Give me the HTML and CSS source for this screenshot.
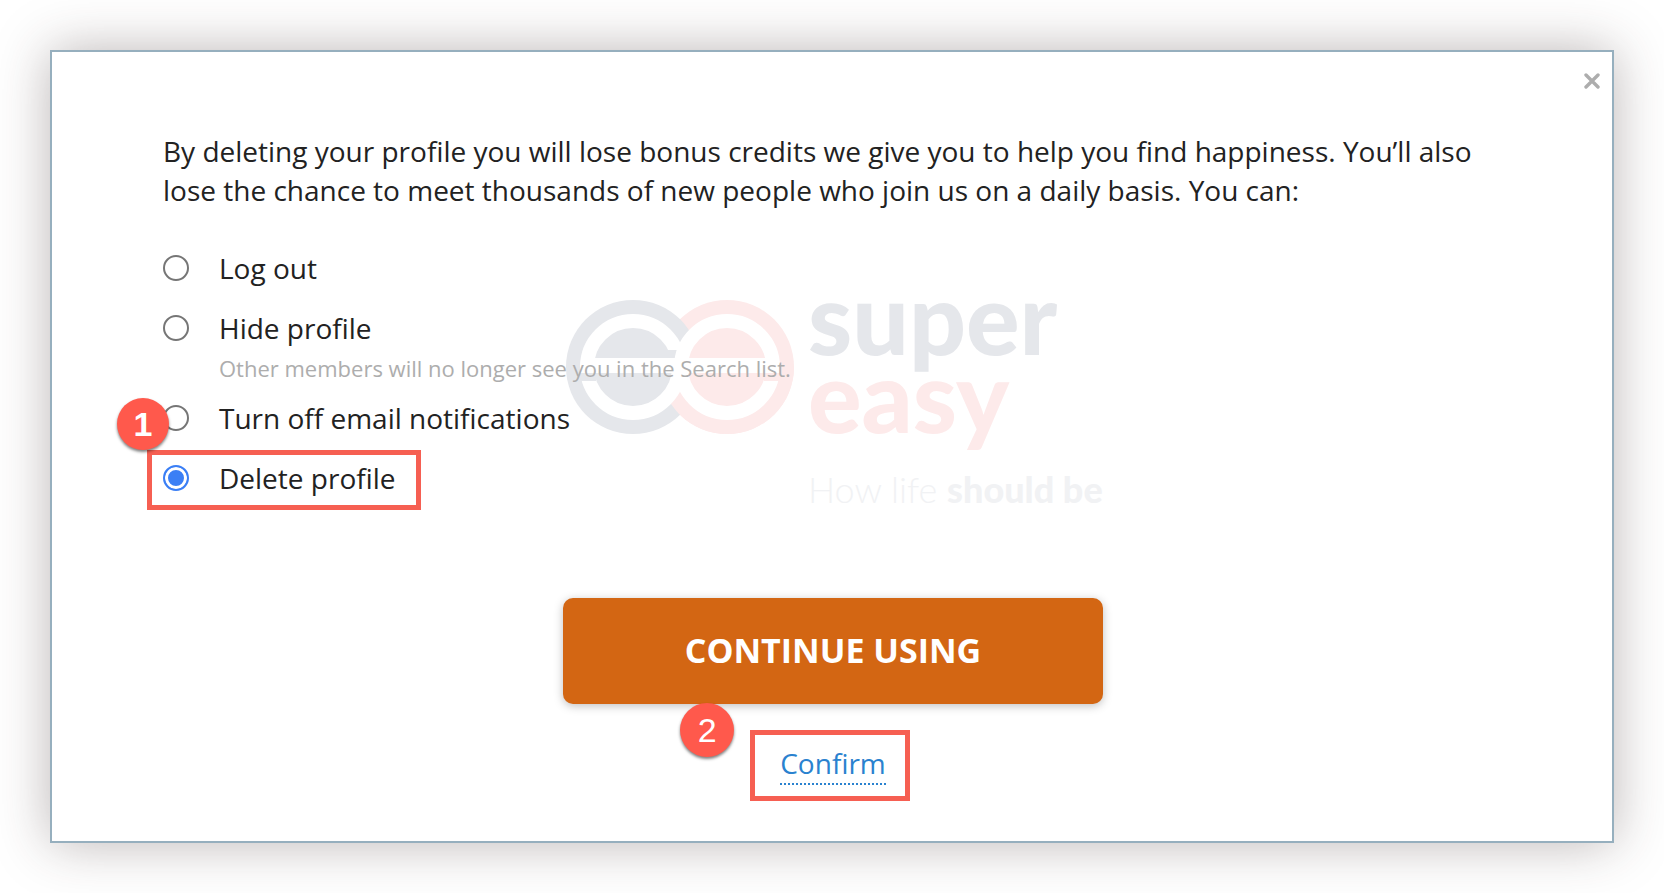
FILE: index.html
```html
<!DOCTYPE html>
<html lang="en">
<head>
  <meta charset="UTF-8">
  <meta name="viewport" content="width=device-width, initial-scale=1.0">
  <title>Delete profile</title>
  <link rel="stylesheet" href="styles.css">
</head>
<body>

  <main class="dialog">
    <button class="close" type="button" aria-label="Close">
      <svg width="16" height="16" viewBox="0 0 16 16">
        <path d="M2 2L14 14M14 2L2 14" stroke="#adadad" stroke-width="3.4" stroke-linecap="round" fill="none"/>
      </svg>
    </button>

    <div class="watermark">
      <svg class="mark" width="228" height="136" viewBox="0 0 228 136">
        <defs>
          <clipPath id="lower"><rect x="0" y="68" width="228" height="68"/></clipPath>
        </defs>
        <circle cx="161" cy="68" r="67" fill="#fdeaea"/>
        <circle cx="67" cy="68" r="67" fill="#e5e7eb"/>
        <circle cx="161" cy="68" r="67" fill="#fdeaea" clip-path="url(#lower)"/>
        <circle cx="67" cy="68" r="46" fill="#e5e7eb" stroke="#fff" stroke-width="14"/>
        <path d="M12 74h18v8H12zM98 51h18v9H98z" fill="#e5e7eb"/>
        <circle cx="161" cy="68" r="46" fill="#fdeaea" stroke="#fff" stroke-width="14"/>
        <path d="M198 74h18v8h-18z" fill="#fdeaea"/>
        <path d="M15 59h198v15H15z" fill="#fff"/>
      </svg>
      <div class="brand">
        <span class="brand-super">super</span>
        <span class="brand-easy">easy</span>
        <span class="tagline">How life <b>should be</b></span>
      </div>
    </div>

    <form class="content">
      <p class="intro">By deleting your profile you will lose bonus credits we give you to help you find happiness. You’ll also lose the chance to meet thousands of new people who join us on a daily basis. You can:</p>

      <div class="options">
        <label class="option"><input type="radio" name="action">Log out</label>
        <div class="option-group">
          <label class="option"><input type="radio" name="action">Hide profile</label>
          <p class="hint">Other members will no longer see you in the Search list.</p>
        </div>
        <label class="option"><input type="radio" name="action">Turn off email notifications</label>
        <div class="highlight highlight-option">
          <label class="option"><input type="radio" name="action" checked>Delete profile</label>
          <span class="badge badge-one">1</span>
        </div>
      </div>

      <div class="actions">
        <button class="continue" type="button">CONTINUE USING</button>
        <div class="highlight highlight-confirm">
          <a class="confirm" href="#">Confirm</a>
          <span class="badge badge-two">2</span>
        </div>
      </div>
    </form>
  </main>

</body>
</html>
```

FILE: styles.css
```css
* {
  box-sizing: border-box;
}

body {
  margin: 0;
  padding: 50px;
  background: #fff;
  color: #222;
  font-family: "Open Sans", sans-serif;
  font-size: 28px;
  line-height: 40px;
}

p {
  margin: 0;
}

.dialog {
  position: relative;
  padding: 80px 109px 40px 111px;
  background: #fff;
  border: 2px solid #96afbe;
  box-shadow: 0 0 50px rgba(60, 40, 40, 0.34);
}

.close {
  position: absolute;
  top: 21px;
  right: 12px;
  display: flex;
  padding: 0;
  border: none;
  background: transparent;
  cursor: pointer;
}

/* ======= WATERMARK ======= */
.watermark {
  position: absolute;
  top: 225px;
  left: 514px;
  display: flex;
  gap: 14px;
}

.mark {
  margin-top: 22px;
}

.brand {
  display: flex;
  flex-direction: column;
  font-family: Lato, sans-serif;
}

.brand-super,
.brand-easy {
  font-size: 100px;
  font-weight: 900;
  line-height: 78px;
}

.brand-super {
  color: #e5e7eb;
}

.brand-easy {
  color: #fdeaea;
}

.tagline {
  margin-top: 36px;
  color: #f1f2f4;
  font-size: 36px;
  font-weight: 300;
}

.tagline b {
  font-weight: 900;
}

/* ======= OPTIONS ======= */
.content {
  position: relative;
}

.intro {
  line-height: 39px;
}

.options {
  display: flex;
  flex-direction: column;
  align-items: flex-start;
  gap: 20px;
  margin-top: 38px;
}

.option {
  display: flex;
  align-items: center;
  gap: 30px;
  cursor: pointer;
}

.option input {
  appearance: none;
  width: 26px;
  height: 26px;
  margin: 0;
  border: 2px solid #767676;
  border-radius: 50%;
  background: #fff;
}

.option input:checked {
  border-color: #3b7ff5;
  background: #3b7ff5;
  box-shadow: inset 0 0 0 3px #fff;
}

.hint {
  margin: 0 0 -10px 56px;
  color: #adadad;
  font-size: 22px;
}

/* ======= HIGHLIGHTS ======= */
.highlight {
  position: relative;
  border: 5px solid #f65f52;
}

.highlight-option {
  margin: -8px -16px -12px;
  padding: 3px 20px 7px 11px;
}

.highlight-confirm {
  margin: 26px 6px 0 0;
  padding: 8px 19px 11px 25px;
}

.badge {
  position: absolute;
  display: flex;
  align-items: center;
  justify-content: center;
  width: 52px;
  height: 52px;
  border-radius: 50%;
  background: #ff594c;
  box-shadow: 0 2px 3px rgba(0, 0, 0, 0.5);
  color: #fff;
  font-family: "Liberation Sans", Arial, sans-serif;
  font-size: 34px;
  font-weight: 700;
}

.badge-one {
  top: -57px;
  left: -35px;
}

.badge-two {
  top: -32px;
  left: -75px;
  width: 54px;
  height: 54px;
  font-weight: 400;
}

/* ======= ACTIONS ======= */
.actions {
  display: flex;
  flex-direction: column;
  align-items: center;
  margin-top: 100px;
}

.continue {
  width: 540px;
  max-width: 100%;
  height: 106px;
  padding: 0 0 2px;
  border: none;
  border-radius: 10px;
  background: #d36613;
  box-shadow: 0 2px 10px rgba(0, 0, 0, 0.25);
  color: #fff;
  font: 700 34px "Open Sans", sans-serif;
  cursor: pointer;
}

.confirm {
  display: block;
  border-bottom: 2px dotted #2a82cf;
  color: #2a82cf;
  text-decoration: none;
}
```
